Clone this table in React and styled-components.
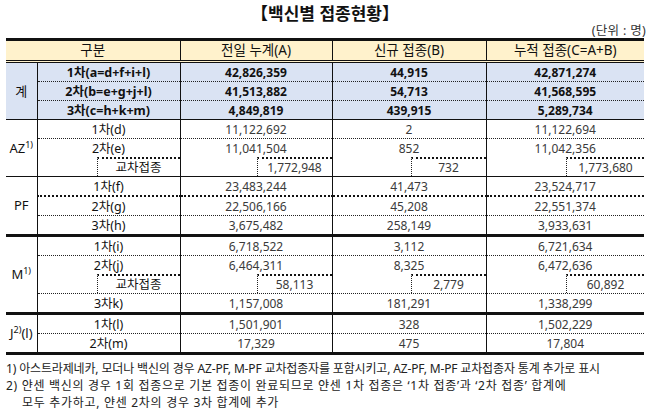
import styled, { createGlobalStyle } from "styled-components"

const GlobalStyle = createGlobalStyle`
  body {
    margin: 0;
    background: #fff;
    font-family: "Noto Sans", "Noto Sans CJK KR", sans-serif;
    color: #111;
  }
`

const groups = [
  {
    name: "계",
    total: true,
    top: "double",
    rows: [
      { label: "1차(a=d+f+i+l)", a: "42,826,359", b: "44,915", c: "42,871,274" },
      { label: "2차(b=e+g+j+l)", a: "41,513,882", b: "54,713", c: "41,568,595" },
      { label: "3차(c=h+k+m)", a: "4,849,819", b: "439,915", c: "5,289,734" },
    ],
  },
  {
    name: "AZ",
    sup: "1)",
    top: "solid",
    rows: [
      { label: "1차(d)", a: "11,122,692", b: "2", c: "11,122,694" },
      { label: "2차(e)", a: "11,041,504", b: "852", c: "11,042,356", open: true },
      { label: "교차접종", a: "1,772,948", b: "732", c: "1,773,680", cross: true },
    ],
  },
  {
    name: "PF",
    top: "solid",
    rows: [
      { label: "1차(f)", a: "23,483,244", b: "41,473", c: "23,524,717" },
      { label: "2차(g)", a: "22,506,166", b: "45,208", c: "22,551,374", sep: "thick" },
      { label: "3차(h)", a: "3,675,482", b: "258,149", c: "3,933,631" },
    ],
  },
  {
    name: "M",
    sup: "1)",
    top: "heavy",
    rows: [
      { label: "1차(i)", a: "6,718,522", b: "3,112", c: "6,721,634" },
      { label: "2차(j)", a: "6,464,311", b: "8,325", c: "6,472,636", open: true },
      { label: "교차접종", a: "58,113", b: "2,779", c: "60,892", cross: true },
      { label: "3차k)", a: "1,157,008", b: "181,291", c: "1,338,299" },
    ],
  },
  {
    name: "J",
    sup: "2)",
    tail: "(l)",
    top: "heavy",
    rows: [
      { label: "1차(l)", a: "1,501,901", b: "328", c: "1,502,229" },
      { label: "2차(m)", a: "17,329", b: "475", c: "17,804" },
    ],
  },
]

const borders = {
  none: "none",
  dotted: "1px dotted #222",
  thick: "2px dotted #111",
  solid: "1px solid #111",
  heavy: "3px solid #111",
  double: "3px double #111",
}

const App = () => {
  return (
    <Page>
      <GlobalStyle />
      <Title>【백신별 접종현황】</Title>
      <Unit>(단위 : 명)</Unit>
      <Table>
        <colgroup>
          <col style={{ width: 31 }} />
          <col style={{ width: 143 }} />
          <col style={{ width: 152 }} />
          <col style={{ width: 154 }} />
          <col style={{ width: 158 }} />
        </colgroup>
        <thead>
          <tr>
            <Th colSpan={2} $first>구분</Th>
            <Th>전일 누계(A)</Th>
            <Th>신규 접종(B)</Th>
            <Th>누적 접종(C=A+B)</Th>
          </tr>
        </thead>
        <tbody>
          {groups.map((g) =>
            g.rows.map((r, i) => {
              const prev = g.rows[i - 1]
              let top = i === 0 ? g.top : r.sep || "dotted"
              if (prev && prev.open) top = "none"
              const bg = g.total ? "#dae3f3" : "transparent"
              return (
                <tr key={g.name + i}>
                  {i === 0 && (
                    <GroupCell rowSpan={g.rows.length} $top={g.top} $bg={bg}>
                      {g.name}
                      {g.sup && <sup>{g.sup}</sup>}
                      {g.tail}
                    </GroupCell>
                  )}
                  {r.cross ? (
                    <>
                      <Td $top="none">
                        <Cross $w={82}>{r.label}</Cross>
                      </Td>
                      <Td $top="none" $num>
                        <Cross $w={74}>{r.a}</Cross>
                      </Td>
                      <Td $top="none" $num>
                        <Cross $w={74}>{r.b}</Cross>
                      </Td>
                      <Td $top="none" $num>
                        <Cross $w={77}>{r.c}</Cross>
                      </Td>
                    </>
                  ) : (
                    <>
                      <Td $top={top} $bg={bg} $bold={g.total}>{r.label}</Td>
                      <Td $top={top} $bg={bg} $bold={g.total} $num>{r.a}</Td>
                      <Td $top={top} $bg={bg} $bold={g.total} $num>{r.b}</Td>
                      <Td $top={top} $bg={bg} $bold={g.total} $num>{r.c}</Td>
                    </>
                  )}
                </tr>
              )
            })
          )}
        </tbody>
      </Table>
      <Notes>
        <Note $spacing={-0.15}>
          1) 아스트라제네카, 모더나 백신의 경우 AZ-PF, M-PF 교차접종자를 포함시키고, AZ-PF, M-PF 교차접종자 통계 추가로 표시
        </Note>
        <Note $spacing={0.7}>
          2) 얀센 백신의 경우 1회 접종으로 기본 접종이 완료되므로 얀센 1차 접종은 ‘1차 접종’과 ‘2차 접종’ 합계에
        </Note>
        <Note $spacing={0.7} $indent={16}>
          모두 추가하고, 얀센 2차의 경우 3차 합계에 추가
        </Note>
      </Notes>
    </Page>
  )
}

const Page = styled.div`
  width: 638px;
  padding: 4px 4px 0 6px;
`

const Title = styled.h1`
  margin: 0;
  text-align: center;
  font-size: 17px;
  font-weight: 700;
  line-height: 20px;
  color: #111;
`

const Unit = styled.div`
  text-align: right;
  font-size: 12.5px;
  line-height: 14px;
  letter-spacing: 0.3px;
  color: #333;
  margin-right: -2px;
`

const Table = styled.table`
  width: 638px;
  border-collapse: collapse;
  table-layout: fixed;
  border-top: 3px solid #111;
  border-bottom: 3px solid #111;
  line-height: 15px;
  sup {
    font-size: 9px;
    vertical-align: 5px;
    line-height: 0;
  }
`

const Th = styled.th`
  height: 19px;
  padding: 0;
  background: #fff2cc;
  font-size: 13.5px;
  font-weight: 400;
  color: #111;
  border-bottom: 3px double #111;
  border-left: ${(p) => (p.$first ? "none" : "1px solid #111")};
`

const GroupCell = styled.td`
  padding: 0;
  text-align: center;
  font-size: 13px;
  color: #111;
  background: ${(p) => p.$bg};
  border-top: ${(p) => borders[p.$top]};
`

const Td = styled.td`
  height: 18px;
  padding: 0;
  text-align: center;
  font-size: ${(p) => (p.$num ? "12px" : "12.5px")};
  font-weight: ${(p) => (p.$bold ? 700 : 400)};
  color: ${(p) => (p.$bold ? "#111" : p.$num ? "#3a3a3a" : "#111")};
  background: ${(p) => p.$bg || "transparent"};
  border-left: 1px solid #111;
  border-top: ${(p) => borders[p.$top]};
`

const Cross = styled.div`
  margin-left: auto;
  width: ${(p) => p.$w}px;
  height: 17px;
  border-left: 1px dotted #222;
  border-top: 2px dotted #111;
  display: flex;
  align-items: center;
  justify-content: center;
`

const Notes = styled.div`
  padding-top: 5px;
`

const Note = styled.div`
  font-size: 12px;
  line-height: 17px;
  color: #222;
  white-space: nowrap;
  letter-spacing: ${(p) => p.$spacing}px;
  padding-left: ${(p) => p.$indent || 0}px;
`

export default App
